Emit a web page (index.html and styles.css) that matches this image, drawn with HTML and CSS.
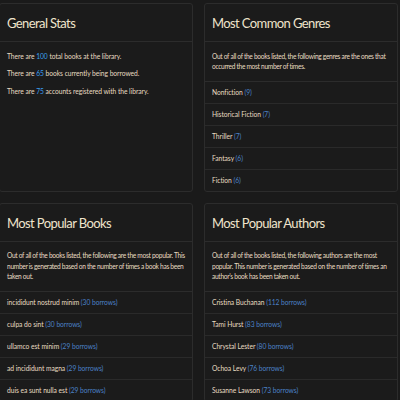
FILE: index.html
```html
<!DOCTYPE html>
<html>
<head>
<meta charset="utf-8">
<link rel="stylesheet" href="styles.css">
</head>
<body>
<div class="grid">
  <section class="card">
    <header class="card-header"><h2>General Stats</h2></header>
    <div class="card-body">
      <p>There are <span class="num">100</span> total books at the library.</p>
      <p>There are <span class="num">65</span> books currently being borrowed.</p>
      <p>There are <span class="num">75</span> accounts registered with the library.</p>
    </div>
  </section>
  <section class="card">
    <header class="card-header"><h2>Most Common Genres</h2></header>
    <div class="card-body"><p class="desc">Out of all of the books listed, the following genres are the ones that<br>occurred the most number of times.</p></div>
    <ul class="list">
      <li>Nonfiction <span class="count">(9)</span></li>
      <li>Historical Fiction <span class="count">(7)</span></li>
      <li>Thriller <span class="count">(7)</span></li>
      <li>Fantasy <span class="count">(6)</span></li>
      <li>Fiction <span class="count">(6)</span></li>
    </ul>
  </section>
  <section class="card">
    <header class="card-header"><h2>Most Popular Books</h2></header>
    <div class="card-body"><p class="desc">Out of all of the books listed, the following are the most popular. This<br>number is generated based on the number of times a book has been<br>taken out.</p></div>
    <ul class="list">
      <li>incididunt nostrud minim <span class="count">(30 borrows)</span></li>
      <li>culpa do sint <span class="count">(30 borrows)</span></li>
      <li>ullamco est minim <span class="count">(29 borrows)</span></li>
      <li>ad incididunt magna <span class="count">(29 borrows)</span></li>
      <li>duis ea sunt nulla est <span class="count">(29 borrows)</span></li>
    </ul>
  </section>
  <section class="card">
    <header class="card-header"><h2>Most Popular Authors</h2></header>
    <div class="card-body"><p class="desc">Out of all of the books listed, the following authors are the most<br>popular. This number is generated based on the number of times an<br>author’s book has been taken out.</p></div>
    <ul class="list">
      <li>Cristina Buchanan <span class="count">(112 borrows)</span></li>
      <li>Tami Hurst <span class="count">(83 borrows)</span></li>
      <li>Chrystal Lester <span class="count">(80 borrows)</span></li>
      <li>Ochoa Levy <span class="count">(76 borrows)</span></li>
      <li>Susanne Lawson <span class="count">(73 borrows)</span></li>
    </ul>
  </section>
</div>
</body>
</html>
```
FILE: styles.css
```css
html, body {
  margin: 0;
  padding: 0;
  background: #1a1a1a;
}
body {
  font-family: "Lato", "Noto Sans", sans-serif;
  color: #e8dcc2;
  font-size: 6.7px;
  line-height: 10.5px;
  letter-spacing: -0.04px;
  overflow: hidden;
  height: 400px;
}
.grid {
  display: grid;
  grid-template-columns: 194px 194px;
  column-gap: 11px;
  row-gap: 11px;
  padding-top: 3px;
  margin-left: -1px;
}
.card {
  border: 1px solid #2c2c2c;
  border-radius: 3px;
  background: #1b1b1b;
  display: flex;
  flex-direction: column;
}
.card-header {
  padding: 9px 7px 8px;
  border-bottom: 1px solid #2c2c2c;
}
.card-header h2 {
  margin: 0;
  font-size: 13px;
  line-height: 20px;
  font-weight: 400;
  letter-spacing: -0.6px;
  color: #efe4cc;
}
.card-body {
  padding: 8.75px 7px;
}
.card-body p {
  margin: 0 0 7px;
}
.card-body p:last-child {
  margin-bottom: 0;
}
.card-body .desc {
  white-space: nowrap;
  font-size: 6.6px;
  letter-spacing: -0.3px;
}
.num {
  color: #3a9ff0;
}
.list {
  list-style: none;
  margin: 0;
  padding: 0;
  border-top: 1px solid #2c2c2c;
}
.list li {
  padding: 5.25px 7px;
  border-bottom: 1px solid #2a2a2a;
}
.list li:last-child {
  border-bottom: none;
}
.count {
  color: #4b82c8;
}
```
